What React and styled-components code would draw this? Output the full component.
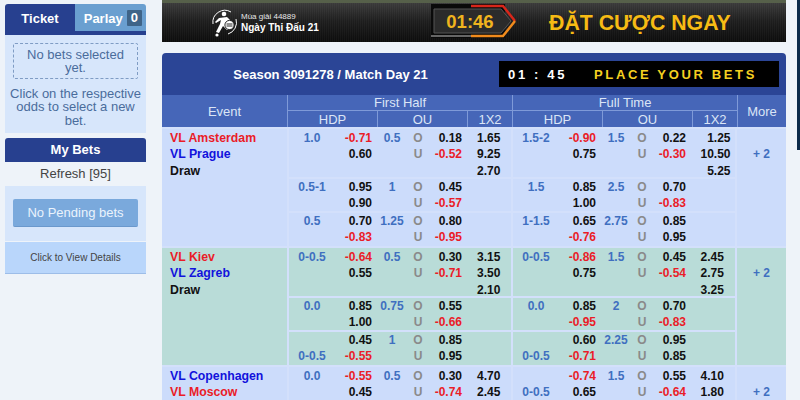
import React from 'react';
import styled, { createGlobalStyle } from 'styled-components';

const GlobalStyle = createGlobalStyle`
    html, body {
        margin: 0;
        padding: 0;
        height: 400px;
        overflow: hidden;
        background: #eef3f9;
        font-family: "Liberation Sans", Arial, sans-serif;
    }
`;

const Page = styled.div`
    display: flex;
    align-items: flex-start;
    width: 800px;
    height: 400px;
    overflow: hidden;
    box-sizing: border-box;
    padding-left: 5px;
`;
const EdgeStrip = styled.div`
    flex: 0 0 3px;
    height: 150px;
    margin-left: 11px;
    background: #0b2a4a;
`;

/* ---------- sidebar ---------- */
const Sidebar = styled.aside`
    flex: 0 0 141px;
    margin-top: 4px;
`;
const Tabs = styled.div`
    display: flex;
    height: 31px;
    box-sizing: border-box;
    border-bottom: 4px solid #27408f;
    border-radius: 3px 3px 0 0;
    overflow: hidden;
`;
const Tab = styled.div`
    flex: 0 0 ${p => (p.$active ? 70 : 71)}px;
    display: flex;
    align-items: center;
    justify-content: ${p => (p.$active ? 'center' : 'flex-end')};
    gap: 4px;
    padding: 1px ${p => (p.$active ? 0 : 4)}px 0 0;
    box-sizing: border-box;
    font-size: 13px;
    font-weight: bold;
    color: #fff;
    background: ${p => (p.$active ? '#27408f' : '#6a9fd0')};
`;
const Count = styled.span`
    background: #3f6488;
    padding: 1px 4px;
    border-radius: 1px;
    line-height: 14px;
`;
const TicketPanel = styled.div`
    background: #d7e6fb;
    height: 98px;
    box-sizing: border-box;
    padding: 8px 8px 0;
    text-align: center;
    font-size: 13px;
    line-height: 13.4px;
    color: #4a6c9b;
`;
const EmptyNote = styled.div`
    height: 36px;
    box-sizing: border-box;
    padding: 4px 8px 0;
    border: 1px dashed #7f9cc4;
    border-radius: 2px;
    margin-bottom: 8px;
`;
const HintText = styled.div`
    margin: 0 -8px;
`;
const SideHead = styled.div`
    margin-top: 5px;
    height: 24px;
    background: #27408f;
    border-radius: 3px 3px 0 0;
    color: #fff;
    font-size: 13px;
    font-weight: bold;
    line-height: 24px;
    text-align: center;
`;
const RefreshRow = styled.div`
    height: 24px;
    line-height: 24px;
    text-align: center;
    font-size: 13px;
    color: #444;
`;
const PendingPanel = styled.div`
    background: #d7e6fb;
    height: 55px;
    box-sizing: border-box;
    padding: 13px 8px 0;
`;
const PendingButton = styled.div`
    height: 28px;
    line-height: 27px;
    box-sizing: border-box;
    background: #7aa9dc;
    border-bottom: 1px solid #6a98cc;
    border-radius: 2px;
    color: #eaf3fd;
    font-size: 13px;
    text-align: center;
`;
const DetailsLink = styled.div`
    margin-top: 1px;
    height: 32px;
    box-sizing: border-box;
    background: #b9d6fb;
    border-bottom: 1px solid #9dbde8;
    color: #444;
    font-size: 10px;
    line-height: 31px;
    text-align: center;
`;

/* ---------- banner ---------- */
const Main = styled.main`
    flex: 0 0 624px;
    margin-left: 16px;
`;
const Banner = styled.div`
    height: 42px;
    display: flex;
    align-items: center;
    box-sizing: border-box;
    border-top: 3px solid #56604a;
    background:
        repeating-linear-gradient(90deg, rgba(255, 255, 255, 0.03) 0 1px, transparent 1px 2px),
        linear-gradient(#3a3a3a, #1e1e1e 45%, #0c0c0c);
    padding-left: 48px;
`;
const Logo = styled.svg`
    flex: 0 0 28px;
    margin-top: 1px;
`;
const LogoText = styled.div`
    flex: 0 0 190px;
    margin-left: 3px;
    color: #e8e8e8;
`;
const Season = styled.div`
    font-size: 8px;
    line-height: 10px;
`;
const DayLabel = styled.div`
    font-size: 10px;
    font-weight: bold;
    line-height: 12px;
    color: #fff;
`;
const TimerWrap = styled.div`
    position: relative;
    flex: 0 0 88px;
    height: 36px;
    margin-top: -3px;
`;
const TimerText = styled.div`
    position: absolute;
    top: 8px;
    left: 8px;
    width: 62px;
    text-align: center;
    font-size: 18.5px;
    line-height: 22px;
    font-weight: bold;
    color: #f0b41e;
`;
const BannerCall = styled.div`
    margin: 2px 0 0 30px;
    font-size: 21.3px;
    font-weight: bold;
    color: #f7bb14;
    white-space: nowrap;
`;

/* ---------- odds board ---------- */
const Board = styled.section`
    margin-top: 11px;
`;
const TitleBar = styled.div`
    height: 42px;
    display: flex;
    align-items: center;
    background: #2b4596;
    border-radius: 4px 4px 0 0;
`;
const Title = styled.div`
    flex: 0 0 337px;
    text-align: center;
    color: #fff;
    font-size: 13px;
    font-weight: bold;
`;
const Countdown = styled.div`
    flex: 0 0 280px;
    height: 26px;
    box-sizing: border-box;
    padding-left: 9px;
    display: flex;
    align-items: center;
    background: #000;
    font-size: 13px;
    font-weight: bold;
    letter-spacing: 2.65px;
    white-space: pre;
`;
const CountdownTime = styled.span`
    flex: 0 0 86px;
    color: #fff;
`;
const CountdownText = styled.span`
    color: #f5d020;
`;

const HeadGrid = styled.div`
    display: grid;
    grid-template-columns: 125px 225px 225px 49px;
    grid-template-rows: 16px 16px;
    background: #4666b8;
    color: #dbe5f6;
    font-size: 13px;
    text-align: center;
`;
const HeadCell = styled.div`
    display: flex;
    align-items: center;
    justify-content: center;
    box-sizing: border-box;
    border-left: 1px solid #7f9ad8;
    ${p => p.$tall && 'grid-row: span 2;'}
    ${p => p.$bottom && 'border-bottom: 1px solid #7f9ad8;'}
    ${p => p.$first && 'border-left: 0;'}
`;
const HalfHead = styled.div`
    display: grid;
    grid-column: ${p => p.$col};
    grid-template-columns: 90px 90px 45px;
`;

const Match = styled.div`
    display: grid;
    grid-template-columns: 125px 224px 224px 51px;
    height: 119px;
    box-sizing: border-box;
    background: ${p => (p.$alt ? '#b9dcd8' : '#ccdcfb')};
    border-top: 2px solid #d3e0fb;
    font-size: 12px;
    font-weight: bold;
`;
const EventCell = styled.div`
    box-sizing: border-box;
    padding: 1px 0 0 8px;
    font-size: 12.3px;
    line-height: 16.4px;
`;
const Team = styled.div`
    color: ${p => p.$color};
`;
const Half = styled.div`
    border-left: 2px solid #d3e0fb;
`;
const SubRow = styled.div`
    display: grid;
    grid-template-columns: 178px 44px;
    box-sizing: border-box;
    height: ${p => p.$height}px;
    padding-top: ${p => p.$pad}px;
    & + & {
        border-top: 2px solid #d3e0fb;
    }
`;
const Line = styled.div`
    display: grid;
    grid-template-columns: 46px 37px 40px 12px 38px;
    height: 16.4px;
    line-height: 16.4px;
`;
const Hdp = styled.span`
    color: #3f6fc0;
    text-align: center;
`;
const Price = styled.span`
    color: ${p => (p.$neg ? '#ea1c28' : '#111')};
    text-align: right;
`;
const Side = styled.span`
    color: #8a8a8a;
    text-align: center;
`;
const ResultCol = styled.div`
    padding-left: ${p => p.$inset}px;
    line-height: 16.4px;
    color: #111;
`;
const ResultValues = styled.div`
    display: inline-block;
    text-align: right;
`;
const MoreCell = styled.div`
    border-left: 2px solid #d3e0fb;
    box-sizing: border-box;
    padding-top: 17.4px;
    line-height: 16.4px;
    text-align: center;
    color: #3f6fc0;
`;

const isNeg = v => v.startsWith('-');
const rowHeights = [48, 34, 35];

const OddsLine = ({ hdp, price, ou, side, ouPrice }) => (
    <Line>
        <Hdp>{hdp}</Hdp>
        <Price $neg={isNeg(price)}>{price}</Price>
        <Hdp>{ou}</Hdp>
        <Side>{side}</Side>
        <Price $neg={isNeg(ouPrice)}>{ouPrice}</Price>
    </Line>
);

const OddsRow = ({ data, result, height, pad, inset }) => (
    <SubRow $height={height} $pad={pad}>
        <div>
            <OddsLine hdp={data[0]} price={data[1]} ou={data[2]} side="O" ouPrice={data[3]} />
            <OddsLine hdp={data[4]} price={data[5]} ou="" side="U" ouPrice={data[6]} />
        </div>
        <ResultCol $inset={inset}>
            {result && (
                <ResultValues>
                    {result.map((r, i) => <div key={i}>{r}</div>)}
                </ResultValues>
            )}
        </ResultCol>
    </SubRow>
);

const matches = [
    {
        teams: [['VL Amsterdam', '#ea1c28'], ['VL Prague', '#1212dc'], ['Draw', '#111']],
        first: {
            result: ['1.65', '9.25', '2.70'],
            rows: [
                ['1.0', '-0.71', '0.5', '0.18', '', '0.60', '-0.52'],
                ['0.5-1', '0.95', '1', '0.45', '', '0.90', '-0.57'],
                ['0.5', '0.70', '1.25', '0.80', '', '-0.83', '-0.95'],
            ],
        },
        full: {
            result: ['1.25', '10.50', '5.25'],
            rows: [
                ['1.5-2', '-0.90', '1.5', '0.22', '', '0.75', '-0.30'],
                ['1.5', '0.85', '2.5', '0.70', '', '1.00', '-0.83'],
                ['1-1.5', '0.65', '2.75', '0.85', '', '-0.76', '0.95'],
            ],
        },
    },
    {
        alt: true,
        teams: [['VL Kiev', '#ea1c28'], ['VL Zagreb', '#1212dc'], ['Draw', '#111']],
        first: {
            result: ['3.15', '3.50', '2.10'],
            rows: [
                ['0-0.5', '-0.64', '0.5', '0.30', '', '0.55', '-0.71'],
                ['0.0', '0.85', '0.75', '0.55', '', '1.00', '-0.66'],
                ['', '0.45', '1', '0.85', '0-0.5', '-0.55', '0.95'],
            ],
        },
        full: {
            result: ['2.45', '2.75', '3.25'],
            rows: [
                ['0-0.5', '-0.86', '1.5', '0.45', '', '0.75', '-0.54'],
                ['0.0', '0.85', '2', '0.70', '', '-0.95', '-0.83'],
                ['', '0.60', '2.25', '0.95', '0-0.5', '-0.71', '0.85'],
            ],
        },
    },
    {
        // only the first two lines of this match are inside the window
        teams: [['VL Copenhagen', '#1212dc'], ['VL Moscow', '#ea1c28']],
        first: {
            result: ['4.70', '2.45'],
            rows: [['0.0', '-0.55', '0.5', '0.30', '', '0.45', '-0.74']],
        },
        full: {
            result: ['4.10', '1.80'],
            rows: [['', '-0.74', '1.5', '0.55', '0-0.5', '0.65', '-0.64']],
        },
    },
];

const HalfColumn = ({ half, inset }) => (
    <Half>
        {half.rows.map((row, i) => (
            <OddsRow
                key={i}
                data={row}
                height={rowHeights[i]}
                pad={i === 0 ? 1 : 0}
                result={i === 0 ? half.result : null}
                inset={inset}
            />
        ))}
    </Half>
);

const HalfHeader = ({ col }) => (
    <HalfHead $col={col}>
        <HeadCell>HDP</HeadCell>
        <HeadCell>OU</HeadCell>
        <HeadCell>1X2</HeadCell>
    </HalfHead>
);

const App = () => {
    return (
        <Page>
            <GlobalStyle />
            <Sidebar>
                <Tabs>
                    <Tab $active>Ticket</Tab>
                    <Tab>Parlay <Count>0</Count></Tab>
                </Tabs>
                <TicketPanel>
                    <EmptyNote>No bets selected yet.</EmptyNote>
                    <HintText>Click on the respective odds to select a new bet.</HintText>
                </TicketPanel>
                <SideHead>My Bets</SideHead>
                <RefreshRow>Refresh [95]</RefreshRow>
                <PendingPanel>
                    <PendingButton>No Pending bets</PendingButton>
                </PendingPanel>
                <DetailsLink>Click to View Details</DetailsLink>
            </Sidebar>
            <Main>
                <Banner>
                    <Logo width="28" height="28" viewBox="0 0 28 28" fill="none">
                        <path d="M3 15 A12 12 0 0 1 21 3" stroke="#fff" strokeWidth="1" />
                        <path d="M26 10 A12 12 0 0 1 18 25" stroke="#fff" strokeWidth="1" />
                        <circle cx="14" cy="5" r="2.3" fill="#fff" />
                        <path d="M9 9 L17 8 L21 12 L17 12 L16 16 L19 20 L17 21 L13 17 L9 24 L6 23 L10 15 L11 11 L6 14 L5 13 Z" fill="#fff" />
                        <circle cx="7" cy="26" r="1.6" fill="#fff" />
                        <circle cx="19.5" cy="16" r="4.6" fill="#fff" stroke="#222" strokeWidth="1" />
                        <path d="M16.5 15 H22.5 M16.5 17 H22.5" stroke="#222" strokeWidth="1" />
                    </Logo>
                    <LogoText>
                        <Season>Mùa giải 44889</Season>
                        <DayLabel>Ngày Thi Đấu 21</DayLabel>
                    </LogoText>
                    <TimerWrap>
                        <svg width="88" height="36" viewBox="0 0 88 36" fill="none">
                            <rect x="0" y="1" width="74" height="34" fill="#0a0a0a" />
                            <path d="M3 6 H70 L80 18 L70 30 H3 Z" fill="#2b2b2b" stroke="#555" strokeWidth="1" />
                            <path d="M40 3 H72 L84 18" stroke="#d8261a" strokeWidth="2.5" />
                            <path d="M84 18 L72 33 H40" stroke="#f08a1c" strokeWidth="2.5" />
                            <path d="M0 33 H40" stroke="#666" strokeWidth="2" />
                        </svg>
                        <TimerText>01:46</TimerText>
                    </TimerWrap>
                    <BannerCall>ĐẶT CƯỢC NGAY</BannerCall>
                </Banner>
                <Board>
                    <TitleBar>
                        <Title>Season 3091278 / Match Day 21</Title>
                        <Countdown>
                            <CountdownTime>01 : 45</CountdownTime>
                            <CountdownText>PLACE YOUR BETS</CountdownText>
                        </Countdown>
                    </TitleBar>
                    <HeadGrid>
                        <HeadCell $tall $first>Event</HeadCell>
                        <HeadCell $bottom>First Half</HeadCell>
                        <HeadCell $bottom>Full Time</HeadCell>
                        <HeadCell $tall>More</HeadCell>
                        <HalfHeader col={2} />
                        <HalfHeader col={3} />
                    </HeadGrid>
                    {matches.map((m, i) => (
                        <Match key={i} $alt={m.alt}>
                            <EventCell>
                                {m.teams.map(([name, color]) => <Team key={name} $color={color}>{name}</Team>)}
                            </EventCell>
                            <HalfColumn half={m.first} inset={10} />
                            <HalfColumn half={m.full} inset={9.5} />
                            <MoreCell>+ 2</MoreCell>
                        </Match>
                    ))}
                </Board>
            </Main>
            <EdgeStrip />
        </Page>
    );
};

export default App;
